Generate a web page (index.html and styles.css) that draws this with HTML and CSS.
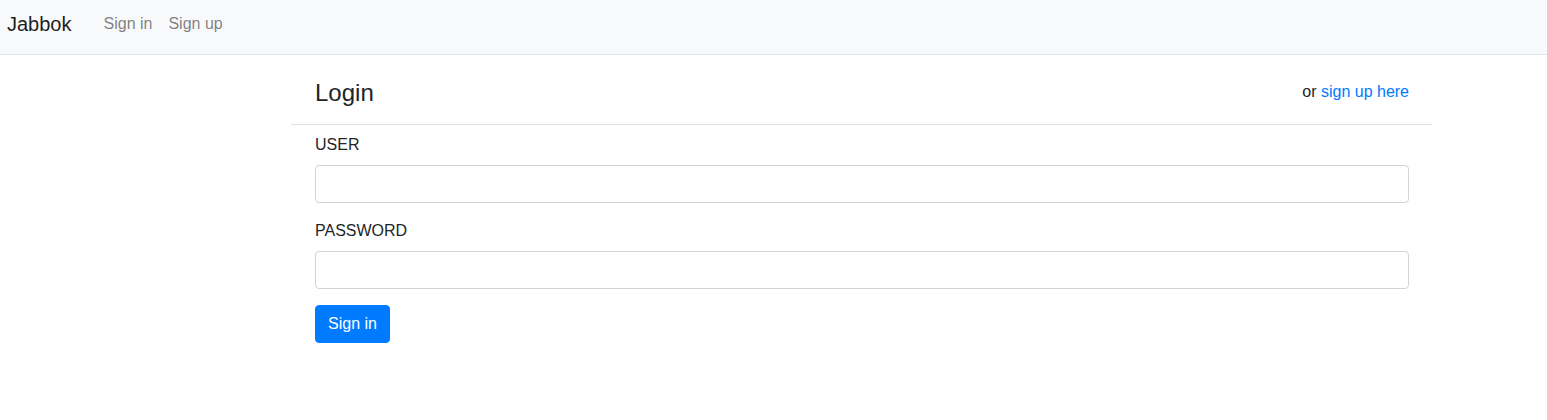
FILE: index.html
```html
<!DOCTYPE html>
<html>
<head>
<meta charset="utf-8">
<link rel="stylesheet" href="styles.css">
</head>
<body>
<nav class="navbar">
  <a class="brand" href="#">Jabbok</a>
  <ul class="nav">
    <li><a class="nav-link" href="#">Sign in</a></li>
    <li><a class="nav-link" href="#">Sign up</a></li>
  </ul>
</nav>
<main class="panel">
  <div class="panel-header">
    <h4 class="title">Login</h4>
    <div class="alt">or <a href="#">sign up here</a></div>
  </div>
  <form class="panel-body">
    <div class="form-group">
      <label class="label">USER</label>
      <input class="input" type="text">
    </div>
    <div class="form-group">
      <label class="label">PASSWORD</label>
      <input class="input" type="password">
    </div>
    <button class="btn" type="button">Sign in</button>
  </form>
</main>
</body>
</html>
```
FILE: styles.css
```css
* { box-sizing: border-box; }
body {
  margin: 0;
  font-family: "Liberation Sans", Arial, sans-serif;
  font-size: 16px;
  line-height: 1.5;
  color: #212529;
  background: #fff;
}
a { text-decoration: none; }
.navbar {
  height: 55px;
  background: #f8f9fa;
  border-bottom: 1px solid #dee2e6;
  display: flex;
  align-items: center;
  padding: 0 0 7px 7px;
}
.brand {
  font-size: 20px;
  line-height: 30px;
  color: rgba(0,0,0,.9);
  margin-right: 24px;
}
.nav {
  list-style: none;
  margin: 0;
  padding: 0;
  display: flex;
}
.nav-link {
  display: block;
  padding: 8px;
  color: rgba(0,0,0,.5);
}
.panel {
  margin-left: 291px;
  width: 1141px;
}
.panel-header {
  display: flex;
  justify-content: space-between;
  align-items: flex-start;
  padding: 24px 23px 16px 24px;
  border-bottom: 1px solid #dee2e6;
}
.title {
  margin: 0;
  font-size: 24px;
  font-weight: 500;
  line-height: 1.2;
}
.alt { color: #212529; margin-top: 1px; }
.alt a { color: #007bff; }
.panel-body {
  padding: 8px 23px 0 24px;
}
.form-group { margin-bottom: 16px; }
.label {
  display: block;
  margin-bottom: 8px;
}
.input {
  display: block;
  width: 100%;
  height: 38px;
  padding: 6px 12px;
  font: inherit;
  border: 1px solid #ced4da;
  border-radius: 4px;
  background: #fff;
}
.btn {
  display: inline-block;
  height: 38px;
  padding: 6px 12px;
  font: inherit;
  color: #fff;
  background: #007bff;
  border: 1px solid #007bff;
  border-radius: 4px;
}
```
